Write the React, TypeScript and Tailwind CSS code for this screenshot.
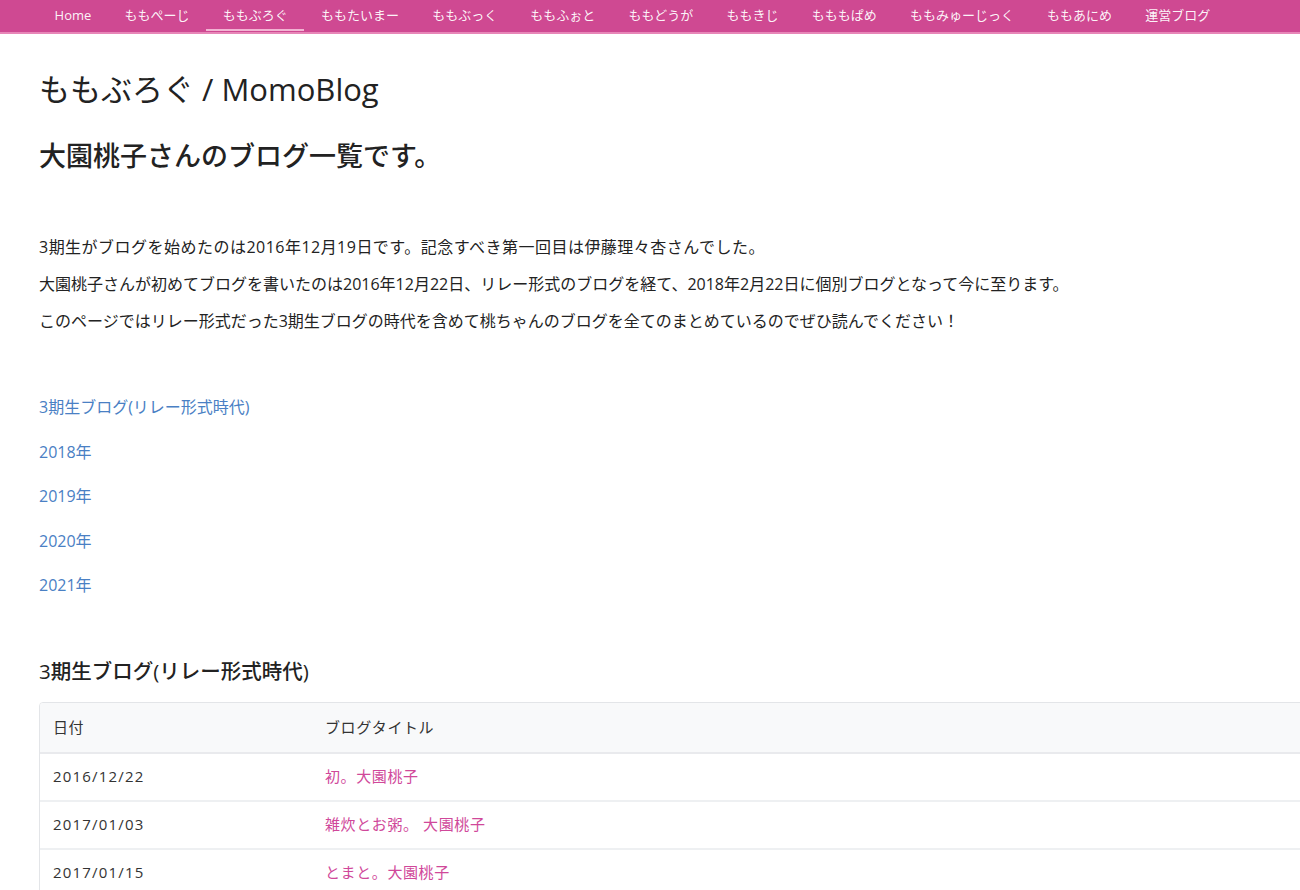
import React from "react"

const navItems = [
  "Home",
  "ももぺーじ",
  "ももぶろぐ",
  "ももたいまー",
  "ももぶっく",
  "ももふぉと",
  "ももどうが",
  "ももきじ",
  "もももぱめ",
  "ももみゅーじっく",
  "ももあにめ",
  "運営ブログ",
]

const links = ["3期生ブログ(リレー形式時代)", "2018年", "2019年", "2020年", "2021年"]

const rows = [
  { date: "2016/12/22", title: "初。大園桃子" },
  { date: "2017/01/03", title: "雑炊とお粥。 大園桃子" },
  { date: "2017/01/15", title: "とまと。大園桃子" },
]

const font = { fontFamily: '"Open Sans", "Noto Sans CJK JP", sans-serif' }

export default function App() {
  return (
    <div className="w-[1300px] h-[890px] overflow-hidden bg-white text-[#333]" style={font}>
      {/* top nav */}
      <nav className="h-[34px] bg-[#cf4992] border-b-2 border-[#e786b8] flex pl-[38px]">
        {navItems.map((item, i) => (
          <div key={item} className="relative px-[16.6px] flex items-center h-[32px] text-[13px] text-white/95 whitespace-nowrap">
            {item}
            {i === 2 && <span className="absolute left-0 right-0 bottom-[1px] h-[2px] bg-[#f2b3d3]" />}
          </div>
        ))}
      </nav>

      <main className="pl-[39px]">
        <h1 className="text-[31px] font-normal leading-none mt-[40px] text-[#222]">ももぶろぐ / MomoBlog</h1>
        <h2 className="text-[27px] font-medium leading-none mt-[37px] text-[#222]">大園桃子さんのブログ一覧です。</h2>

        <div className="mt-[70px] text-[16px] leading-none flex flex-col gap-[21px] text-[#222]">
          <p className="tracking-[0.03em]">3期生がブログを始めたのは2016年12月19日です。記念すべき第一回目は伊藤理々杏さんでした。</p>
          <p>大園桃子さんが初めてブログを書いたのは2016年12月22日、リレー形式のブログを経て、2018年2月22日に個別ブログとなって今に至ります。</p>
          <p>このページではリレー形式だった3期生ブログの時代を含めて桃ちゃんのブログを全てのまとめているのでぜひ読んでください！</p>
        </div>

        <div className="mt-[70px] flex flex-col gap-[28.5px] text-[16px] leading-none text-[#4a80c4]">
          {links.map(l => (
            <a key={l} className="w-fit">{l}</a>
          ))}
        </div>

        <h3 className="mt-[68px] text-[20.5px] font-medium leading-none text-[#222]">3期生ブログ(リレー形式時代)</h3>

        <div className="mt-[20px] w-[1300px] border border-[#e3e5e8] rounded-[4px] overflow-hidden text-[15px] tracking-[0.04em]">
          <div className="flex h-[51px] items-center bg-[#f8f9fa] border-b-2 border-[#e9eaed]">
            <div className="w-[285px] pl-[13px]">日付</div>
            <div>ブログタイトル</div>
          </div>
          {rows.map(r => (
            <div key={r.date} className="flex h-[48px] items-center border-b-2 border-[#eef0f2]">
              <div className="w-[285px] pl-[13px] tracking-[0.08em]">{r.date}</div>
              <div className="text-[#d0489a]">{r.title}</div>
            </div>
          ))}
        </div>
      </main>
    </div>
  )
}
